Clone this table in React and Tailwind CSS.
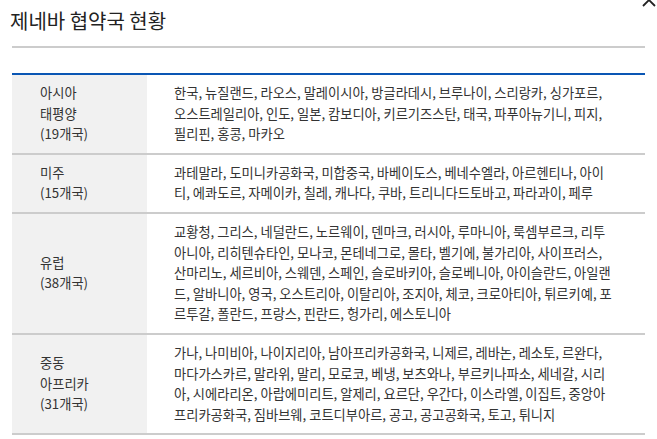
export default function App() {
  const rows = [
    {
      label: ["아시아", "태평양", "(19개국)"],
      text: "한국, 뉴질랜드, 라오스, 말레이시아, 방글라데시, 브루나이, 스리랑카, 싱가포르, 오스트레일리아, 인도, 일본, 캄보디아, 키르기즈스탄, 태국, 파푸아뉴기니, 피지, 필리핀, 홍콩, 마카오",
    },
    {
      label: ["미주", "(15개국)"],
      text: "과테말라, 도미니카공화국, 미합중국, 바베이도스, 베네수엘라, 아르헨티나, 아이티, 에콰도르, 자메이카, 칠레, 캐나다, 쿠바, 트리니다드토바고, 파라과이, 페루",
    },
    {
      label: ["유럽", "(38개국)"],
      text: "교황청, 그리스, 네덜란드, 노르웨이, 덴마크, 러시아, 루마니아, 룩셈부르크, 리투아니아, 리히텐슈타인, 모나코, 몬테네그로, 몰타, 벨기에, 불가리아, 사이프러스, 산마리노, 세르비아, 스웨덴, 스페인, 슬로바키아, 슬로베니아, 아이슬란드, 아일랜드, 알바니아, 영국, 오스트리아, 이탈리아, 조지아, 체코, 크로아티아, 튀르키예, 포르투갈, 폴란드, 프랑스, 핀란드, 헝가리, 에스토니아",
    },
    {
      label: ["중동", "아프리카", "(31개국)"],
      text: "가나, 나미비아, 나이지리아, 남아프리카공화국, 니제르, 레바논, 레소토, 르완다, 마다가스카르, 말라위, 말리, 모로코, 베냉, 보츠와나, 부르키나파소, 세네갈, 시리아, 시에라리온, 아랍에미리트, 알제리, 요르단, 우간다, 이스라엘, 이집트, 중앙아프리카공화국, 짐바브웨, 코트디부아르, 공고, 공고공화국, 토고, 튀니지",
    },
  ];
  return (
    <div className="relative w-[657px] h-[439px] overflow-hidden bg-white font-['Noto_Sans_CJK_KR','Noto_Sans',sans-serif]">
      <button className="absolute right-[1px] top-[-7px] w-[14px] h-[14px] text-[#222]">
        <svg viewBox="0 0 14 14" width="14" height="14" fill="none" stroke="currentColor" strokeWidth="1.8">
          <path d="M1 1L13 13M13 1L1 13" />
        </svg>
      </button>
      <div className="px-3">
        <h2 className="ml-[-2px] pt-[7px] text-[20px] leading-[28px] text-[#222] font-normal">제네바 협약국 현황</h2>
        <div className="mt-[11px] h-[2px] bg-[#cccccc]"></div>
        <div className="mt-[25px] h-[2px] bg-[#0a56b4]"></div>
        <div className="text-[13.25px] leading-[20.6px] text-[#333]">
          {rows.map((r, i) => (
            <div key={i} className="grid grid-cols-[135px_1fr] border-b-2 border-[#cccccc]">
              <div className="bg-[#f1f1f1] pl-[28px] flex flex-col justify-center py-2">
                {r.label.map((l, j) => (
                  <div key={j}>{l}</div>
                ))}
              </div>
              <div className="pl-[27px] pr-[28px] py-2">{r.text}</div>
            </div>
          ))}
        </div>
      </div>
    </div>
  );
}
